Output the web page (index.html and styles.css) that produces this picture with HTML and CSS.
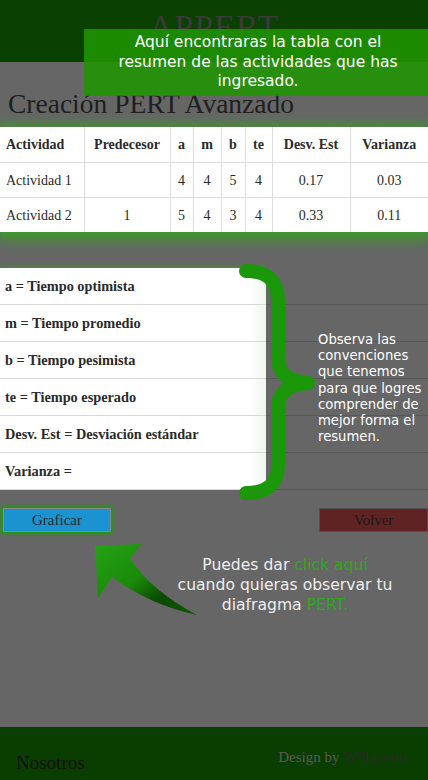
FILE: index.html
```html
<!DOCTYPE html>
<html lang="es">
<head>
<meta charset="utf-8">
<title>APPERT</title>
<link rel="stylesheet" href="styles.css">
</head>
<body>
<header class="site-header">
  <h1 class="brand">APPERT</h1>
</header>
<div class="tip tip-top">Aquí encontraras la tabla con el<br>resumen de las actividades que has<br>ingresado.</div>

<main class="content">
  <h2 class="page-title">Creación PERT Avanzado</h2>

  <div class="table-wrap">
    <table class="pert">
      <colgroup>
        <col class="c-act"><col class="c-pre"><col class="c-a"><col class="c-m"><col class="c-b"><col class="c-te"><col class="c-desv"><col class="c-var">
      </colgroup>
      <thead>
        <tr><th class="left">Actividad</th><th>Predecesor</th><th>a</th><th>m</th><th>b</th><th>te</th><th>Desv. Est</th><th>Varianza</th></tr>
      </thead>
      <tbody>
        <tr><td class="left">Actividad 1</td><td></td><td>4</td><td>4</td><td>5</td><td>4</td><td>0.17</td><td>0.03</td></tr>
        <tr><td class="left">Actividad 2</td><td>1</td><td>5</td><td>4</td><td>3</td><td>4</td><td>0.33</td><td>0.11</td></tr>
      </tbody>
    </table>
  </div>

  <div class="legend">
    <div class="legend-row"><div class="legend-cell">a = Tiempo optimista</div><div class="legend-rest"></div></div>
    <div class="legend-row"><div class="legend-cell">m = Tiempo promedio</div><div class="legend-rest"></div></div>
    <div class="legend-row"><div class="legend-cell">b = Tiempo pesimista</div><div class="legend-rest"></div></div>
    <div class="legend-row"><div class="legend-cell">te = Tiempo esperado</div><div class="legend-rest"></div></div>
    <div class="legend-row"><div class="legend-cell">Desv. Est = Desviación estándar</div><div class="legend-rest"></div></div>
    <div class="legend-row"><div class="legend-cell">Varianza =</div><div class="legend-rest"></div></div>

    <svg class="brace" width="80" height="250" viewBox="0 0 80 250" aria-hidden="true">
      <path d="M10,10 Q42,10 42,40 L42,97 Q42,120 72,122 Q42,124 42,147 L42,204 Q42,232 10,232" fill="none" stroke="#1a980a" stroke-width="14" stroke-linecap="round" stroke-linejoin="round"/>
    </svg>
    <p class="tip-side">Observa las<br>convenciones<br>que tenemos<br>para que logres<br>comprender de<br>mejor forma el<br>resumen.</p>
  </div>

  <div class="actions">
    <button class="btn btn-graficar">Graficar</button>
    <button class="btn btn-volver">Volver</button>
  </div>

  <div class="hint">
    <svg class="arrow" width="110" height="80" viewBox="0 0 110 80" aria-hidden="true">
      <defs>
        <linearGradient id="ag" x1="0" y1="0" x2="1" y2="1">
          <stop offset="0" stop-color="#24a314"/>
          <stop offset="0.45" stop-color="#1a8a0a"/>
          <stop offset="0.7" stop-color="#0b4a02"/>
          <stop offset="1" stop-color="#0e5a04"/>
        </linearGradient>
      </defs>
      <path d="M2,8 L49,6 L37,20 Q57,52 104,77 Q57,67 19,39 L5,60 Z" fill="url(#ag)"/>
    </svg>
    <p class="hint-text">Puedes dar <span class="hl">click aquí</span><br>cuando quieras observar tu<br>diafragma <span class="hl">PERT.</span></p>
  </div>
</main>

<footer class="site-footer">
  <span class="foot-link">Nosotros</span>
  <span class="credit">Design by <span class="credit-name">W3layouts</span></span>
</footer>
</body>
</html>
```

FILE: styles.css
```css
* { box-sizing: border-box; }

html, body {
  margin: 0;
  padding: 0;
}

body {
  width: 428px;
  min-height: 780px;
  display: flex;
  flex-direction: column;
  background: #666666;
  font-family: "Liberation Serif", "Times New Roman", serif;
  position: relative;
}

.site-header {
  height: 62px;
  background: #0a4000;
  display: flex;
  justify-content: center;
}

.brand {
  margin: 8px 0 0;
  font-weight: normal;
  font-size: 34px;
  letter-spacing: 1px;
  color: #3a3a3a;
  line-height: 38px;
}

.tip {
  position: absolute;
  font-family: "DejaVu Sans", "Open Sans", sans-serif;
  color: #ffffff;
}

.tip-top {
  left: 84px;
  top: 29px;
  width: 344px;
  height: 67px;
  padding: 4px 0 0 4px;
  background: rgba(30, 150, 0, 0.86);
  text-align: center;
  font-size: 15.5px;
  line-height: 19.5px;
}

.content {
  flex: 1;
  display: flex;
  flex-direction: column;
}

.page-title {
  margin: 27px 0 0 8px;
  font-weight: normal;
  font-size: 27.5px;
  line-height: 30px;
  color: #1f1f1f;
}

.table-wrap {
  margin-top: 8px;
  background: #ffffff;
  box-shadow: 0 3px 13px 4px rgba(52, 165, 30, 0.92);
  position: relative;
}

.pert {
  width: 100%;
  border-collapse: collapse;
  table-layout: fixed;
  font-size: 14px;
  color: #2a2a2a;
}

.c-act { width: 84px; }
.c-pre { width: 86px; }
.c-a { width: 23px; }
.c-m { width: 28px; }
.c-b { width: 24px; }
.c-te { width: 27px; }
.c-desv { width: 78px; }
.c-var { width: 78px; }

.pert th, .pert td {
  height: 35px;
  padding: 2px 0 0;
  text-align: center;
  border-right: 1px solid #dddddd;
  border-bottom: 1px solid #dddddd;
  white-space: nowrap;
}

.pert th:last-child, .pert td:last-child { border-right: none; }
.pert tbody tr:last-child td { border-bottom: none; }

.pert th { font-weight: bold; }

.pert .left {
  text-align: left;
  padding-left: 6px;
}

.legend {
  margin-top: 36px;
  position: relative;
}

.legend-row {
  display: flex;
  height: 37px;
}

.legend-cell {
  width: 266px;
  background: linear-gradient(to right, #ffffff 0, #ffffff 250px, #eef6ec 266px);
  border-bottom: 1px solid #d8d8d8;
  display: flex;
  align-items: center;
  padding-left: 5px;
  font-weight: bold;
  font-size: 14.3px;
  color: #2a2a2a;
}

.legend-row:first-child .legend-cell {
  box-shadow: 0 -2px 3px rgba(60, 160, 30, 0.5);
}

.legend-rest {
  flex: 1;
  border-bottom: 1px solid #585858;
}

.legend-row:last-child .legend-cell { border-bottom: none; }

.brace {
  position: absolute;
  left: 236px;
  top: -7px;
}

.tip-side {
  position: absolute;
  left: 318px;
  top: 64px;
  margin: 0;
  font-family: "DejaVu Sans", "Open Sans", sans-serif;
  font-size: 13.2px;
  line-height: 16.2px;
  color: #ffffff;
}

.actions {
  margin-top: 18px;
  display: flex;
  justify-content: space-between;
  padding-left: 3px;
}

.btn {
  height: 24px;
  width: 108px;
  font-family: "Liberation Serif", "Times New Roman", serif;
  font-size: 15px;
  padding: 0;
  cursor: pointer;
}

.btn-graficar {
  background: #1b93d1;
  border: 1px solid #8a8a8a;
  color: #2a2a2a;
  box-shadow: 0 0 3px 2px rgba(30, 160, 10, 0.95);
}

.btn-volver {
  width: 109px;
  background: #5f2323;
  border: 1px solid #4f4f4f;
  color: #1a1a1a;
}

.hint {
  position: relative;
  height: 100px;
}

.arrow {
  position: absolute;
  left: 93px;
  top: 6px;
}

.hint-text {
  position: absolute;
  left: 155px;
  width: 260px;
  top: 23px;
  margin: 0;
  text-align: center;
  font-family: "DejaVu Sans", "Open Sans", sans-serif;
  font-size: 15.6px;
  line-height: 20px;
  color: #eeeeee;
}

.hl { color: #2ea81c; }

.site-footer {
  height: 53px;
  background: #0a3d00;
  display: flex;
  justify-content: space-between;
  align-items: flex-end;
  padding: 0 20px 6px 16px;
}

.foot-link {
  font-size: 19px;
  color: #121212;
  line-height: 22px;
}

.credit {
  font-size: 15px;
  color: #5a5a5a;
  line-height: 22px;
  margin-bottom: 6px;
}

.credit-name { color: #2a2a2a; }
```
